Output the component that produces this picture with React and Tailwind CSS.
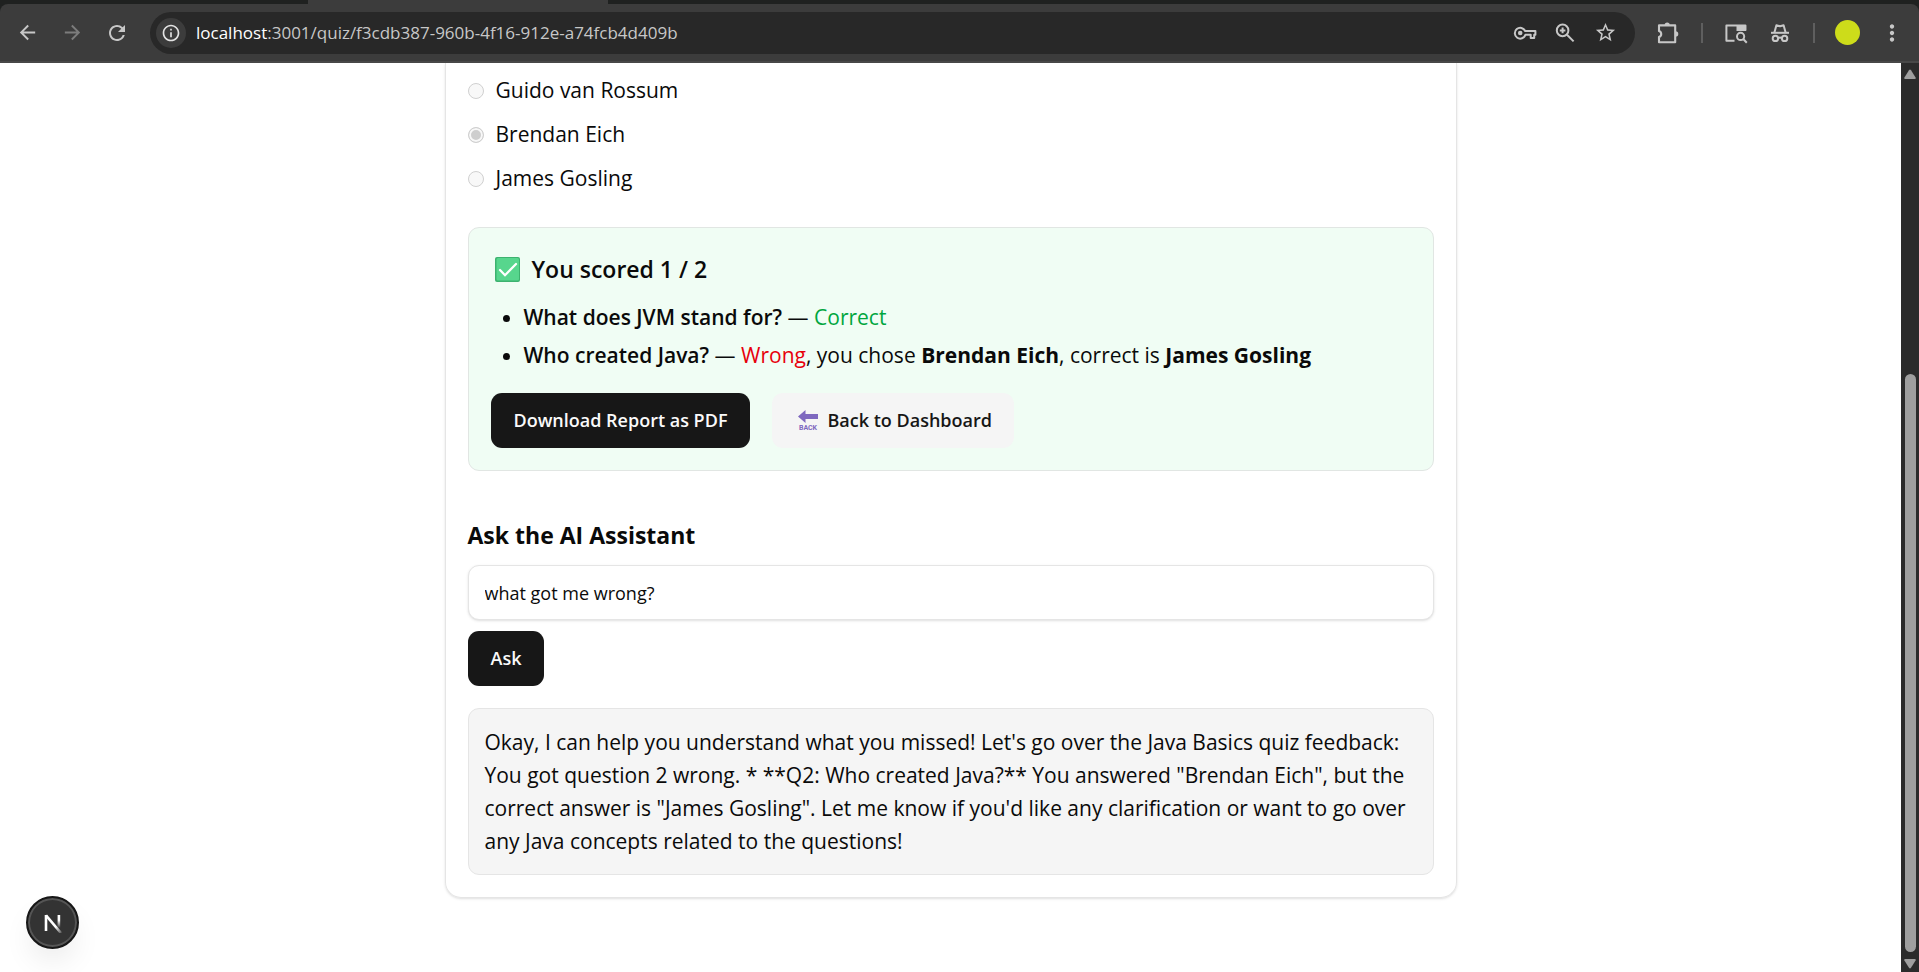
import { useState } from "react";
import {
  MdArrowBack,
  MdArrowForward,
  MdRefresh,
  MdInfoOutline,
  MdStarBorder,
  MdMoreVert,
} from "react-icons/md";

function KeyIcon() {
  return (
    <svg width="24" height="24" viewBox="0 0 24 24" fill="none" stroke="currentColor" strokeWidth="2" strokeLinejoin="round">
      <path d="M12.2 10.1h10.2v3.7h-1.2v3.2h-3.5v-3.2h-5.3a5.4 5.4 0 1 1-.2-3.7z" />
      <circle cx="7.2" cy="12" r="2.3" fill="currentColor" stroke="none" />
    </svg>
  );
}

function ZoomInIcon() {
  return (
    <svg width="22" height="22" viewBox="0 0 22 22" fill="none" stroke="currentColor" strokeWidth="2">
      <circle cx="8.6" cy="8.4" r="5.8" />
      <path d="M13 12.8l6.6 6.6M8.6 5.6v5.6M5.8 8.4h5.6" />
    </svg>
  );
}

function PuzzleIcon() {
  return (
    <svg width="24" height="24" viewBox="0 0 24 24" fill="none" stroke="currentColor" strokeWidth="2.1" strokeLinejoin="round">
      <path d="M3 4.4h16.2v16.8H3v-5.2a3.2 3.2 0 0 0 0-6.1z" />
      <path d="M8.6 4.2a2.6 2.6 0 0 1 5.2 0zM19.6 10.2a2.7 2.7 0 0 1 0 5.4z" fill="currentColor" stroke="none" />
    </svg>
  );
}

function TabSearchIcon() {
  return (
    <svg width="24" height="24" viewBox="0 0 24 24" fill="none" stroke="currentColor" strokeWidth="2" strokeLinejoin="round">
      <path d="M10.5 19.8H2.4V4.6h19v5" />
      <path d="M12.5 4h9.6v6h-9.6z" fill="currentColor" stroke="none" />
      <circle cx="16.6" cy="15.4" r="3.6" />
      <path d="M19.2 18l3.6 3.8" />
    </svg>
  );
}

function IncognitoIcon() {
  return (
    <svg width="22" height="22" viewBox="0 0 22 22" fill="none" stroke="currentColor" strokeWidth="2" strokeLinejoin="round">
      <path d="M2 10.8h18" />
      <path d="M5.4 10.6l2-7.4 3.6 1 3.6-1 2 7.4" />
      <circle cx="6.4" cy="16.4" r="2.7" />
      <circle cx="15.6" cy="16.4" r="2.7" />
      <path d="M9.1 16.2q1.9-1.2 3.8 0" />
    </svg>
  );
}

function CheckBadge() {
  return (
    <svg width="25" height="25" viewBox="0 0 25 25" aria-hidden="true">
      <rect width="25" height="25" rx="2" fill="#3db26f" />
      <rect x="1.5" y="1" width="22.5" height="22.5" rx="1.5" fill="#57d68d" />
      <path d="M5 13l5 5.2L21 7" fill="none" stroke="#fff" strokeWidth="2.3" strokeLinecap="round" />
    </svg>
  );
}

function BackSign() {
  return (
    <svg width="22" height="24" viewBox="-1 -1 22 24" fill="#7e68bf" aria-hidden="true">
      <path d="M0 6.5L7.5 0v4H20v5H7.5v4z" />
      <text x="10" y="20" textAnchor="middle" fontFamily="Roboto, sans-serif" fontSize="7" fontWeight="700">
        BACK
      </text>
    </svg>
  );
}

function ToolButton({ label, className = "", children }) {
  return (
    <button type="button" aria-label={label} className={`flex h-10 shrink-0 items-center justify-center ${className}`}>
      {children}
    </button>
  );
}

function BrowserBar() {
  return (
    <header className="shrink-0 bg-[#1f2120] text-[#c7c7c7]">
      <div className="flex h-1">
        <div className="w-[308px] rounded-br-sm" />
        <div className="w-[300px] bg-[#3c3c3c]" />
      </div>
      <div className="flex h-[59px] items-center rounded-t-lg border-b-2 border-[#484848] bg-[#3c3c3c] pr-[7px] pl-[5px]">
        <div className="flex gap-px">
          <ToolButton label="Back" className="w-11">
            <MdArrowBack size={23} />
          </ToolButton>
          <ToolButton label="Forward" className="w-11 text-[#7c7c7c]">
            <MdArrowForward size={23} />
          </ToolButton>
          <ToolButton label="Reload" className="w-11">
            <MdRefresh size={24} />
          </ToolButton>
        </div>
        <div className="ml-[11px] flex h-[42px] min-w-0 flex-1 items-center rounded-full bg-[#282828] pr-[10px] pl-[6px]">
          <button type="button" aria-label="Site information" className="flex size-[30px] shrink-0 items-center justify-center rounded-full bg-[#3c3c3c] text-[#e3e3e3]">
            <MdInfoOutline size={20} />
          </button>
          <div className="ml-[10px] min-w-0 flex-1 truncate text-[17px] leading-6">
            <span className="text-white">localhost</span>:3001/quiz/f3cdb387-960b-4f16-912e-a74fcb4d409b
          </div>
          <ToolButton label="Passwords" className="w-10">
            <KeyIcon />
          </ToolButton>
          <ToolButton label="Zoom" className="w-10">
            <ZoomInIcon />
          </ToolButton>
          <ToolButton label="Bookmark" className="w-10">
            <MdStarBorder size={23} />
          </ToolButton>
        </div>
        <ToolButton label="Extensions" className="ml-[13px] w-10">
          <PuzzleIcon />
        </ToolButton>
        <div className="mx-[13px] h-5 w-[2px] bg-[#5f5f5f]" />
        <ToolButton label="Search tabs" className="mr-1 w-10">
          <TabSearchIcon />
        </ToolButton>
        <ToolButton label="Incognito" className="w-10">
          <IncognitoIcon />
        </ToolButton>
        <div className="mr-5 ml-[13px] h-5 w-[2px] bg-[#5f5f5f]" />
        <button type="button" aria-label="Profile" className="size-[25px] rounded-full bg-[#cddc1a]" />
        <ToolButton label="Menu" className="ml-3 w-10">
          <MdMoreVert size={26} />
        </ToolButton>
      </div>
    </header>
  );
}

function Scrollbar() {
  return (
    <div className="flex w-[18px] shrink-0 flex-col items-center bg-[#2b2b2b] py-[2px]" aria-hidden="true">
      <svg width="12" height="18" viewBox="0 0 12 18" fill="#9f9f9f">
        <path d="M5 5.2q1-1.4 2 0l4.6 7.2q.7 1.6-1 1.6H1.4q-1.7 0-1-1.6z" />
      </svg>
      <div className="flex-[291]" />
      <div className="w-[11px] flex-[578] rounded-full bg-[#9f9f9f]" />
      <svg width="12" height="18" viewBox="0 0 12 18" fill="#9f9f9f">
        <path d="M5 15.8q1 1.4 2 0l4.6-7.2q.7-1.6-1-1.6H1.4q-1.7 0-1 1.6z" />
      </svg>
    </div>
  );
}

const options = ["Guido van Rossum", "Brendan Eich", "James Gosling"];

function Options() {
  return (
    <div className="flex flex-col gap-[11px]">
      {options.map((name) => (
        <label key={name} className="flex items-center gap-3 leading-[33px]">
          <input
            type="radio"
            name="creator"
            disabled
            defaultChecked={name === "Brendan Eich"}
            className="size-4 appearance-none rounded-full border border-[#d0d0d0] bg-[#f8f8f8] checked:bg-[#cecece] checked:shadow-[inset_0_0_0_2px_#f8f8f8]"
          />
          {name}
        </label>
      ))}
    </div>
  );
}

function Results() {
  return (
    <section className="mt-8 rounded-[11px] border border-[#e1e6e3] bg-[#f0fdf4] p-[22px]">
      <h2 className="flex items-center gap-3 pl-1 text-[23px] leading-[39px] font-semibold">
        <CheckBadge />
        You scored 1 / 2
      </h2>
      <ul className="mt-3 flex list-disc flex-col gap-[5px] pl-[33px] leading-[33px]">
        <li>
          <span className="font-semibold">What does JVM stand for?</span> — <span className="text-[#00a63e]">Correct</span>
        </li>
        <li>
          <span className="font-semibold">Who created Java?</span> — <span className="text-[#e7000b]">Wrong</span>, you chose{" "}
          <strong>Brendan Eich</strong>, correct is <strong>James Gosling</strong>
        </li>
      </ul>
      <div className="mt-[21px] flex gap-[22px] text-[18px] font-semibold">
        <button type="button" className="h-[55px] rounded-[11px] bg-[#171717] px-[23px] text-[#fafafa]">
          Download Report as PDF
        </button>
        <button type="button" className="flex h-[55px] items-center gap-2 rounded-[11px] bg-[#f5f5f5] pr-[22px] pl-[25px] text-[#171717]">
          <BackSign />
          Back to Dashboard
        </button>
      </div>
    </section>
  );
}

function Assistant() {
  const [question, setQuestion] = useState("what got me wrong?");
  return (
    <section className="mt-[45px] flex flex-col items-start">
      <h2 className="text-[23px] leading-[39px] font-bold">
        <label htmlFor="question">Ask the AI Assistant</label>
      </h2>
      <input
        id="question"
        type="text"
        value={question}
        onChange={(e) => setQuestion(e.target.value)}
        className="mt-[10px] h-[55px] w-full rounded-[11px] border border-[#e5e5e5] bg-white px-4 text-[18px] shadow-sm outline-none"
      />
      <button type="button" className="mt-[11px] h-[55px] rounded-[11px] bg-[#171717] px-[23px] text-[18px] font-semibold text-[#fafafa]">
        Ask
      </button>
      <div className="mt-[22px] w-full rounded-[11px] border border-[#e5e5e5] bg-[#f5f5f5] px-4 pt-[17px] pb-4 leading-[33px]">
        Okay, I can help you understand what you missed! Let's go over the Java Basics quiz feedback: You got question 2
        wrong. * **Q2: Who created Java?** You answered "Brendan Eich", but the correct answer is "James Gosling". Let
        me know if you'd like any clarification or want to go over any Java concepts related to the questions!
      </div>
    </section>
  );
}

function DevBadge() {
  return (
    <button
      type="button"
      aria-label="Open developer tools"
      className="fixed bottom-[23px] left-[26px] flex size-[53px] items-center justify-center rounded-full border-2 border-[#171717] bg-[#333] shadow-[0_16px_32px_-8px_rgba(0,0,0,0.12),inset_0_0_0_2px_#555]"
    >
      <svg width="20" height="20" viewBox="0 0 20 20" fill="none" strokeWidth="2.6">
        <defs>
          <linearGradient id="stem" x1="0" y1="0" x2="0" y2="1">
            <stop offset="0.4" stopColor="#fff" />
            <stop offset="1" stopColor="#fff" stopOpacity="0" />
          </linearGradient>
          <linearGradient id="diagonal" x1="0" y1="0" x2="1" y2="1">
            <stop offset="0.65" stopColor="#fff" />
            <stop offset="1" stopColor="#fff" stopOpacity="0.2" />
          </linearGradient>
        </defs>
        <path d="M3 18V2" stroke="#fff" />
        <path d="M3 2.4L18 20" stroke="url(#diagonal)" />
        <path d="M14.6 2h2.6v13h-2.6z" fill="url(#stem)" />
      </svg>
    </button>
  );
}

export default function App() {
  return (
    <div className="flex h-screen flex-col overflow-hidden bg-white font-['Open_Sans','Noto_Sans',sans-serif] text-[21px] text-[#0a0a0a]">
      <BrowserBar />
      <div className="flex min-h-0 flex-1">
        <main className="min-w-0 flex-1 overflow-hidden px-6">
          <div className="mx-auto max-w-[1012px] rounded-b-2xl border border-t-0 border-[#e5e5e5] px-[22px] pt-[11px] pb-[22px] shadow-sm">
            <Options />
            <Results />
            <Assistant />
          </div>
        </main>
        <Scrollbar />
      </div>
      <DevBadge />
    </div>
  );
}
